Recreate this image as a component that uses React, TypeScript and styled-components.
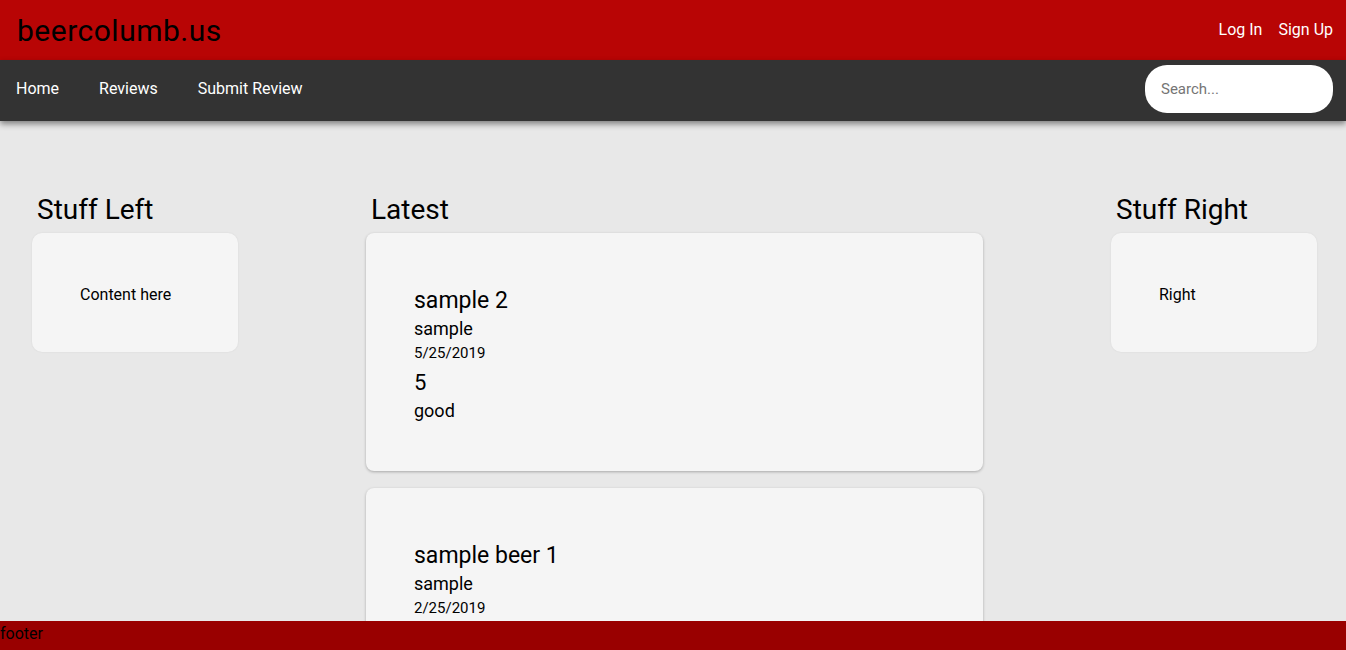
import React from "react";
import styled, { createGlobalStyle } from "styled-components";

const Global = createGlobalStyle`
  html, body { margin: 0; padding: 0; }
  body {
    background: #e8e8e8;
    font-family: Roboto, "Liberation Sans", Arial, sans-serif;
    color: #000;
    overflow: hidden;
  }
`;

const Page = styled.div`
  min-height: 650px;
  display: flex;
  flex-direction: column;
`;

const TopBar = styled.header`
  height: 60px;
  background: #b80505;
  display: flex;
  align-items: center;
  justify-content: space-between;
  padding: 0 13px 0 17px;
  box-sizing: border-box;
`;

const Brand = styled.h1`
  margin: 0;
  font-size: 30px;
  font-weight: 400;
  color: #000;
  letter-spacing: 0.5px;
`;

const AuthLinks = styled.div`
  display: flex;
  gap: 16px;
  margin-top: -2px;
`;

const AuthLink = styled.a`
  color: #fff;
  font-size: 16px;
  text-decoration: none;
`;

const NavBar = styled.nav`
  height: 61px;
  background: #333333;
  display: flex;
  align-items: center;
  justify-content: space-between;
  padding: 0 13px 0 16px;
  box-sizing: border-box;
  box-shadow: 0 3px 6px rgba(0, 0, 0, 0.45);
  position: relative;
  z-index: 1;
`;

const NavLinks = styled.div`
  display: flex;
  gap: 40px;
  margin-top: -4px;
`;

const NavLink = styled.a`
  color: #fff;
  font-size: 16px;
  text-decoration: none;
`;

const Search = styled.input`
  width: 188px;
  height: 48px;
  border: none;
  border-radius: 22px;
  background: #fff;
  padding: 0 16px;
  box-sizing: border-box;
  font-family: inherit;
  font-size: 15px;
  outline: none;
  margin-top: -3px;
  &::placeholder { color: #757575; }
`;

const Main = styled.main`
  display: grid;
  grid-template-columns: 206px 617px 206px;
  justify-content: space-between;
  align-items: start;
  padding: 74px 29px 0 32px;
`;

const Column = styled.section`
  display: flex;
  flex-direction: column;
  gap: 17px;
`;

const Heading = styled.h2`
  margin: -1px 0 -10px 5px;
  font-size: 28px;
  font-weight: 400;
  line-height: 32px;
  height: 32px;
`;

const SideCard = styled.div`
  height: 119px;
  background: #f5f5f5;
  border-radius: 10px;
  box-shadow: 0 0 2px rgba(0, 0, 0, 0.08);
  display: flex;
  align-items: center;
  padding: 3px 48px 0;
  box-sizing: border-box;
  font-size: 16px;
`;

const ReviewCard = styled.article`
  background: #f5f5f5;
  border-radius: 8px;
  box-shadow: 0 1px 3px rgba(0, 0, 0, 0.28);
  padding: 54px 48px 46px;
  display: flex;
  flex-direction: column;
`;

const Title = styled.div`
  font-size: 23px;
  line-height: 28px;
`;

const Style = styled.div`
  font-size: 18px;
  line-height: 28px;
`;

const DateText = styled.div`
  font-size: 15px;
  line-height: 20px;
`;

const Rating = styled.div`
  font-size: 22px;
  line-height: 28px;
  margin-top: 6px;
`;

const Verdict = styled.div`
  font-size: 18px;
  line-height: 28px;
`;

const Footer = styled.footer`
  position: fixed;
  left: 0;
  right: 0;
  bottom: 0;
  height: 29px;
  background: #990000;
  font-size: 16px;
  line-height: 26px;
  color: #000;
  z-index: 2;
`;

const reviews = [
  { title: "sample 2", style: "sample", date: "5/25/2019", rating: "5", verdict: "good" },
  { title: "sample beer 1", style: "sample", date: "2/25/2019", rating: "4", verdict: "ok" },
];

export default function App() {
  return (
    <Page>
      <Global />
      <TopBar>
        <Brand>beercolumb.us</Brand>
        <AuthLinks>
          <AuthLink href="#">Log In</AuthLink>
          <AuthLink href="#">Sign Up</AuthLink>
        </AuthLinks>
      </TopBar>
      <NavBar>
        <NavLinks>
          <NavLink href="#">Home</NavLink>
          <NavLink href="#">Reviews</NavLink>
          <NavLink href="#">Submit Review</NavLink>
        </NavLinks>
        <Search placeholder="Search..." />
      </NavBar>
      <Main>
        <Column>
          <Heading>Stuff Left</Heading>
          <SideCard>Content here</SideCard>
        </Column>
        <Column>
          <Heading>Latest</Heading>
          {reviews.map((r) => (
            <ReviewCard key={r.title}>
              <Title>{r.title}</Title>
              <Style>{r.style}</Style>
              <DateText>{r.date}</DateText>
              <Rating>{r.rating}</Rating>
              <Verdict>{r.verdict}</Verdict>
            </ReviewCard>
          ))}
        </Column>
        <Column>
          <Heading>Stuff Right</Heading>
          <SideCard>Right</SideCard>
        </Column>
      </Main>
      <Footer>footer</Footer>
    </Page>
  );
}
